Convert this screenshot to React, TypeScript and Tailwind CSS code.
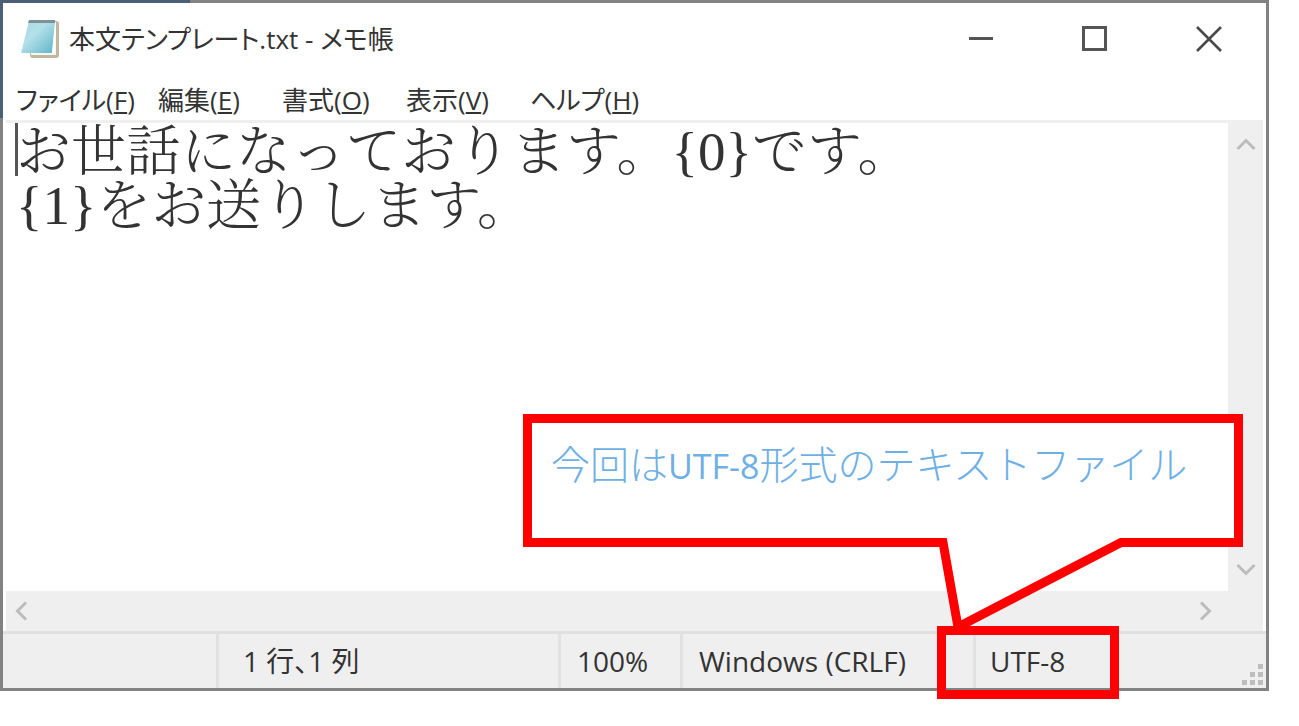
import React from "react";

const menus = [
  { label: "ファイル", key: "F" },
  { label: "編集", key: "E" },
  { label: "書式", key: "O" },
  { label: "表示", key: "V" },
  { label: "ヘルプ", key: "H" },
];

const content = "お世話になっております。{0}です。\n{1}をお送りします。";

function NotepadIcon() {
  return (
    <svg viewBox="0 0 40 42" className="h-[42px] w-10 shrink-0" aria-hidden="true">
      <defs>
        <linearGradient id="cover" x1="0" y1="0" x2="1" y2="1">
          <stop offset="0" stopColor="#a5d8e2" />
          <stop offset="0.4" stopColor="#b4e0e9" />
          <stop offset="1" stopColor="#5cb4ca" />
        </linearGradient>
      </defs>
      <path d="M10 3 H35 Q38 3 38 6 V37 Q38 40 35 40 H12 Q9 40 9 37 Z" fill="#c2b69c" />
      <path d="M9 4 H35 V37 H10 Z" fill="#f8f6f2" />
      <path d="M8 3 H34 L31 35 H0 Z" fill="url(#cover)" />
      <path d="M8 2 H34 V5 H7 Z" fill="#7d9298" />
      <path d="M34 6 L31 35 H34 L35 12 Z" fill="#ffffff" />
    </svg>
  );
}

function Chevron({ d }: { d: string }) {
  return (
    <svg viewBox="0 0 20 20" className="size-5" aria-hidden="true">
      <path d={d} fill="none" stroke="#bcbcbc" strokeWidth="3" />
    </svg>
  );
}

function Grip() {
  const dots = [[16, 0], [8, 8], [16, 8], [0, 16], [8, 16], [16, 16]];
  return (
    <svg viewBox="0 0 22 22" className="absolute right-0.5 bottom-0.5 size-[22px]" aria-hidden="true">
      {dots.map(([x, y]) => (
        <rect key={`${x}-${y}`} x={x} y={y} width="5" height="5" fill="#bdbdbd" />
      ))}
    </svg>
  );
}

export default function App() {
  return (
    <main className="flex min-h-screen flex-col bg-white pr-[30px] pb-[35px] font-['Open_Sans','Noto_Sans_CJK_JP',sans-serif] text-[#333]">
      <section className="relative flex flex-1 flex-col border-[3px] border-[#828282] bg-white">
        <span className="absolute -top-[3px] -left-[3px] h-[3px] w-[190px] bg-[#4b6078]" />
        <span className="absolute -top-[3px] -left-[3px] h-[118px] w-[3px] bg-[#4b6078]" />

        <header className="flex h-[72px] items-center pl-[18px]">
          <NotepadIcon />
          <h1 className="flex-1 pl-2 text-[26px] leading-9 [font-feature-settings:'palt']">
            本文テンプレート.txt - メモ帳
          </h1>
          <div className="flex">
            <button aria-label="最小化" className="flex h-[70px] w-[114px] items-center justify-center">
              <svg viewBox="0 0 26 26" className="size-[26px]"><path d="M1 12.5H25" stroke="#555" strokeWidth="3" /></svg>
            </button>
            <button aria-label="最大化" className="flex h-[70px] w-[114px] items-center justify-center">
              <svg viewBox="0 0 26 26" className="size-[26px]"><rect x="1.5" y="1.5" width="22" height="22" fill="none" stroke="#555" strokeWidth="3" /></svg>
            </button>
            <button aria-label="閉じる" className="flex h-[70px] w-[114px] items-center justify-center">
              <svg viewBox="0 0 26 26" className="size-[26px]"><path d="M1 1L25 25M25 1L1 25" stroke="#4a4a4a" strokeWidth="2.6" /></svg>
            </button>
          </div>
        </header>

        <nav className="mx-[3px] flex h-[48px] items-center border-b-[3px] border-[#efefef] pt-1 pl-2.5">
          {menus.map((m) => (
            <button
              key={m.key}
              className="w-[124px] text-left text-[26px] leading-9 whitespace-nowrap [font-feature-settings:'palt'] first:w-[142px]"
            >
              {m.label}(<span className="underline decoration-2 underline-offset-2">{m.key}</span>)
            </button>
          ))}
        </nav>

        <div className="mx-[3px] flex flex-1">
          <div className="relative flex flex-1">
            <textarea
              aria-label="本文"
              defaultValue={content}
              spellCheck={false}
              className="flex-1 resize-none overflow-hidden pt-0.5 pl-2.5 font-['Liberation_Serif','Noto_Serif_CJK_JP','Noto_Sans_CJK_JP',serif] text-[55px] leading-[54px] font-light text-[#333] outline-none"
            />
            <span className="absolute top-0 left-[9px] h-[53px] w-[3px] bg-[#555]" />
          </div>
          <div className="flex w-[35px] flex-col items-center justify-between bg-[#efefef] pt-3 pb-3">
            <button aria-label="上へスクロール"><Chevron d="M1.5 14L10 5.5L18.5 14" /></button>
            <button aria-label="下へスクロール"><Chevron d="M1.5 6L10 14.5L18.5 6" /></button>
          </div>
        </div>

        <div className="mx-[3px] flex h-10 items-center justify-between bg-[#efefef] pr-[48px] pl-1.5">
          <button aria-label="左へスクロール"><Chevron d="M14 1.5L5.5 10L14 18.5" /></button>
          <button aria-label="右へスクロール"><Chevron d="M6 1.5L14.5 10L6 18.5" /></button>
        </div>

        <footer className="relative flex h-[57px] items-stretch border-t-[3px] border-[#e0e0e0] bg-[#efefef] pl-[3px] text-[28px] leading-[54px] whitespace-nowrap">
          <div className="flex-1" />
          <div className="w-[342px] border-l-[3px] border-[#e2e2e2] pl-6 [font-feature-settings:'palt']">1 行、1 列</div>
          <div className="w-[122px] border-l-[3px] border-[#e2e2e2] pl-4">100%</div>
          <div className="w-[293px] border-l-[3px] border-[#e2e2e2] pl-4">Windows (CRLF)</div>
          <div className="relative w-[293px] border-l-[3px] border-[#e2e2e2] pl-3.5">
            UTF-8
            <span className="absolute -top-2 -left-[39px] h-[73px] w-[182px] border-[9px] border-[#ff0000]" />
          </div>
          <Grip />
        </footer>

        <aside className="absolute right-[23px] bottom-[57px] h-[217px] w-[720px]">
          <svg viewBox="0 0 720 217" className="absolute inset-0 size-full" aria-hidden="true">
            <path
              d="M4.5 4.5H715.5V128.5H598L435 213L420 128.5H4.5Z"
              fill="#ffffff"
              stroke="#ff0000"
              strokeWidth="9"
            />
          </svg>
          <p className="relative pt-[23px] pl-7 font-['Noto_Sans_CJK_JP',sans-serif] text-[39px] leading-[50px] font-light whitespace-nowrap text-[#6fb0e4]">
            今回は<span className="font-['Open_Sans',sans-serif] text-[34px] font-normal">UTF-8</span>形式のテキストファイル
          </p>
        </aside>
      </section>
    </main>
  );
}
